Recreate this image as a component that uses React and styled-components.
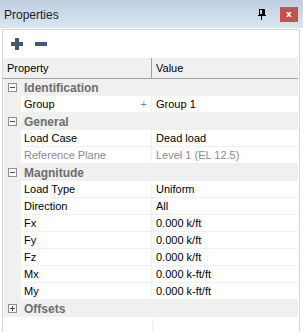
import React from "react";
import styled, { createGlobalStyle } from "styled-components";

const Global = createGlobalStyle`
  html, body { margin: 0; padding: 0; background: #ffffff; }
  body { font-family: "Liberation Sans", Arial, sans-serif; }
`;

const Window = styled.div`
  width: 303px;
  height: 332px;
  display: flex;
  flex-direction: column;
  background: #ffffff;
  overflow: hidden;
`;

const TitleBar = styled.div`
  height: 28px;
  flex: none;
  display: flex;
  align-items: center;
  padding: 0 5px 0 4px;
  background: linear-gradient(#bfcfe1, #d9e5f1);
  box-sizing: border-box;
`;

const Title = styled.div`
  flex: 1;
  font-family: "Liberation Sans", Arial, sans-serif;
  font-size: 12px;
  color: #1e1e1e;
  padding-top: 1px;
`;

const PinButton = styled.div`
  width: 16px;
  height: 16px;
  display: flex;
  align-items: center;
  justify-content: center;
  margin-right: 10px;
`;

const CloseButton = styled.div`
  width: 18px;
  height: 15px;
  background: #c75050;
  display: flex;
  align-items: center;
  justify-content: center;
  color: #ffffff;
  font-family: "DejaVu Sans", sans-serif;
  font-weight: bold;
  font-size: 9px;
  line-height: 1;
`;

const Frame = styled.div`
  flex: 1;
  margin: 1px 3px 0 2px;
  border: 1px solid #d6d6d6;
  border-bottom: none;
  display: flex;
  flex-direction: column;
  min-height: 0;
`;

const Toolbar = styled.div`
  height: 28px;
  flex: none;
  display: flex;
  align-items: center;
  gap: 12px;
  padding-left: 8px;
`;

const ToolIcon = styled.svg`
  display: block;
`;

const Grid = styled.div`
  flex: 1;
  display: grid;
  grid-template-columns: 149px 1fr;
  grid-template-rows: 21px;
  grid-auto-rows: 17px;
  align-content: start;
  background: linear-gradient(#f0f0f0, #f0f0f0) 149px 0 / 1px 100% no-repeat;
`;

const HeaderRow = styled.div`
  grid-column: 1 / -1;
  display: grid;
  grid-template-columns: 149px 1fr;
  margin-right: 1px;
`;

const HeaderCell = styled.div`
  box-sizing: border-box;
  background: #f0f0f0;
  border-bottom: 1px solid #a0a0a0;
  border-right: ${(p) => (p.$first ? "1px solid #a0a0a0" : "none")};
  font-size: 11px;
  color: #000;
  display: flex;
  align-items: center;
  padding-left: 4px;
`;

const CategoryRow = styled.div`
  grid-column: 1 / -1;
  display: flex;
  align-items: center;
  background: #f0f0f0;
  margin-right: 1px;
`;

const Expander = styled.div`
  width: 9px;
  height: 9px;
  box-sizing: border-box;
  border: 1px solid #8f8f8f;
  background: #ffffff;
  margin-left: 5px;
  margin-right: 7px;
  position: relative;
  &::before {
    content: "";
    position: absolute;
    left: 1px;
    top: 3px;
    width: 5px;
    height: 1px;
    background: #4a4a4a;
  }
  &::after {
    content: "";
    display: ${(p) => (p.$collapsed ? "block" : "none")};
    position: absolute;
    left: 3px;
    top: 1px;
    width: 1px;
    height: 5px;
    background: #4a4a4a;
  }
`;

const CategoryLabel = styled.span`
  font-size: 12px;
  font-weight: bold;
  color: #6d6d6d;
`;

const NameCell = styled.div`
  display: flex;
  align-items: center;
  box-sizing: border-box;
  background: linear-gradient(#f0f0f0, #f0f0f0) 0 0 / 18px 100% no-repeat, #ffffff;
  border-bottom: 1px solid #f0f0f0;
  border-right: 1px solid #f0f0f0;
  padding-left: 21px;
  padding-right: 4px;
  font-size: 11px;
  color: ${(p) => (p.$muted ? "#8b8b8b" : "#000000")};
`;

const NameText = styled.span`
  flex: 1;
`;

const PlusMark = styled.span`
  color: #8a8a8a;
  font-size: 11px;
`;

const ValueCell = styled.div`
  display: flex;
  align-items: center;
  box-sizing: border-box;
  background: #ffffff;
  border-bottom: 1px solid #f0f0f0;
  padding-left: 4px;
  margin-right: 1px;
  font-size: 11px;
  color: ${(p) => (p.$muted ? "#8b8b8b" : "#000000")};
`;

const sections = [
  {
    name: "Identification",
    rows: [{ name: "Group", value: "Group 1", plus: true }],
  },
  {
    name: "General",
    rows: [
      { name: "Load Case", value: "Dead load" },
      { name: "Reference Plane", value: "Level 1 (EL 12.5)", muted: true },
    ],
  },
  {
    name: "Magnitude",
    rows: [
      { name: "Load Type", value: "Uniform" },
      { name: "Direction", value: "All" },
      { name: "Fx", value: "0.000 k/ft" },
      { name: "Fy", value: "0.000 k/ft" },
      { name: "Fz", value: "0.000 k/ft" },
      { name: "Mx", value: "0.000 k-ft/ft" },
      { name: "My", value: "0.000 k-ft/ft" },
    ],
  },
  { name: "Offsets", collapsed: true, rows: [] },
];

export default function App() {
  return (
    <>
      <Global />
      <Window>
        <TitleBar>
          <Title>Properties</Title>
          <PinButton>
            <svg width="8" height="11" viewBox="0 0 8 11">
              <rect x="1.5" y="0.5" width="5" height="5" fill="none" stroke="#000" />
              <rect x="4" y="1" width="2" height="4" fill="#000" />
              <rect x="0" y="6" width="8" height="1" fill="#000" />
              <rect x="3" y="7" width="1" height="4" fill="#000" />
            </svg>
          </PinButton>
          <CloseButton>x</CloseButton>
        </TitleBar>
        <Frame>
          <Toolbar>
            <ToolIcon width="12" height="12" viewBox="0 0 12 12">
              <rect x="4" y="0" width="4" height="12" fill="#3d5a7d" />
              <rect x="0" y="4" width="12" height="4" fill="#3d5a7d" />
            </ToolIcon>
            <ToolIcon width="12" height="12" viewBox="0 0 12 12">
              <rect x="0" y="4" width="12" height="4" fill="#3d5a7d" />
            </ToolIcon>
          </Toolbar>
          <Grid>
            <HeaderRow>
              <HeaderCell $first>Property</HeaderCell>
              <HeaderCell>Value</HeaderCell>
            </HeaderRow>
            {sections.map((s) => (
              <React.Fragment key={s.name}>
                <CategoryRow>
                  <Expander $collapsed={s.collapsed} />
                  <CategoryLabel>{s.name}</CategoryLabel>
                </CategoryRow>
                {s.rows.map((r) => (
                  <React.Fragment key={r.name}>
                    <NameCell $muted={r.muted}>
                      <NameText>{r.name}</NameText>
                      {r.plus && <PlusMark>+</PlusMark>}
                    </NameCell>
                    <ValueCell $muted={r.muted}>{r.value}</ValueCell>
                  </React.Fragment>
                ))}
              </React.Fragment>
            ))}
          </Grid>
        </Frame>
      </Window>
    </>
  );
}
